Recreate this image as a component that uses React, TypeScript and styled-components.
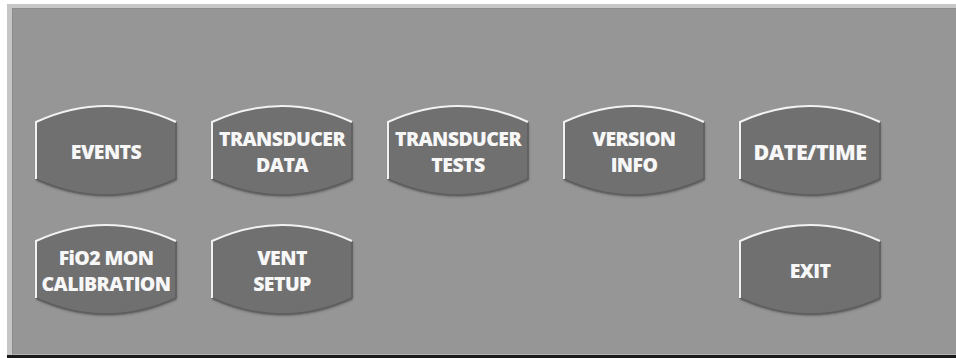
import React, { useId } from "react";
import styled, { createGlobalStyle } from "styled-components";

const Global = createGlobalStyle`
  html, body { margin: 0; padding: 0; background: #ffffff; }
  body { width: 956px; height: 358px; overflow: hidden; font-family: "Open Sans", "Liberation Sans", sans-serif; }
`;

const Screen = styled.div`
  width: 956px;
  height: 358px;
  display: flex;
  flex-direction: column;
  padding: 4px 0 0 7px;
  box-sizing: border-box;
`;

const Frame = styled.div`
  flex: 1;
  display: flex;
  flex-direction: column;
  border-left: 5px solid #c6c6c6;
  border-top: 4px solid #c6c6c6;
`;

const Panel = styled.div`
  flex: 1;
  background: #969696;
  border-top: 1px solid #8c8c8c;
  border-left: 1px solid #8c8c8c;
  border-bottom: 1px solid #b4b4b4;
  padding: 96px 0 0 22px;
  box-sizing: border-box;
`;

const BottomBar = styled.div`
  height: 3px;
  background: #1a1a1a;
`;

const Grid = styled.div`
  display: grid;
  grid-template-columns: repeat(5, 142px);
  grid-auto-rows: 92px;
  column-gap: 34px;
  row-gap: 27px;
`;

const Btn = styled.button<{ $col: number }>`
  grid-column: ${(p) => p.$col};
  position: relative;
  width: 142px;
  height: 92px;
  padding: 0;
  border: none;
  background: transparent;
  display: flex;
  align-items: center;
  justify-content: center;
  cursor: pointer;
`;

const Shape = styled.svg`
  position: absolute;
  left: 0;
  top: 0;
  overflow: visible;
`;

const Label = styled.span<{ $size: number }>`
  position: relative;
  color: #f7f7f7;
  font-family: "Open Sans", "Liberation Sans", sans-serif;
  font-weight: 800;
  font-size: ${(p) => p.$size}px;
  line-height: 26px;
  letter-spacing: -0.6px;
  text-align: center;
  margin-top: 2px;
`;

function KeyShape() {
  const id = useId().replace(/:/g, "");
  return (
    <Shape width="142" height="92" viewBox="0 0 142 92">
      <defs>
        <filter id={`s${id}`} x="-10%" y="-10%" width="120%" height="130%">
          <feDropShadow dx="0.5" dy="1.5" stdDeviation="1" floodColor="#3c3c3c" floodOpacity="0.7" />
        </filter>
      </defs>
      <path
        d="M1,17 Q71,-15 141,17 L141,74 Q71,106 1,74 Z"
        fill="#707070"
        filter={`url(#s${id})`}
      />
      <path d="M141,17 L141,74 Q71,106 1,74" fill="none" stroke="#5e5e5e" strokeWidth="1.6" />
      <path d="M1,74 L1,17 Q71,-15 141,17" fill="none" stroke="#f2f2f2" strokeWidth="2" />
    </Shape>
  );
}

type Item = { lines: string[]; col: number; size?: number };

const row1: Item[] = [
  { lines: ["EVENTS"], col: 1 },
  { lines: ["TRANSDUCER", "DATA"], col: 2 },
  { lines: ["TRANSDUCER", "TESTS"], col: 3 },
  { lines: ["VERSION", "INFO"], col: 4 },
  { lines: ["DATE/TIME"], col: 5, size: 21.5 },
];

const row2: Item[] = [
  { lines: ["FiO2 MON", "CALIBRATION"], col: 1 },
  { lines: ["VENT", "SETUP"], col: 2 },
  { lines: ["EXIT"], col: 5 },
];

function Key({ item }: { item: Item }) {
  return (
    <Btn $col={item.col}>
      <KeyShape />
      <Label $size={item.size ?? 19.5}>
        {item.lines.map((l, i) => (
          <React.Fragment key={i}>
            {i > 0 && <br />}
            {l}
          </React.Fragment>
        ))}
      </Label>
    </Btn>
  );
}

export default function App() {
  return (
    <>
      <Global />
      <Screen>
        <Frame>
          <Panel>
            <Grid>
              {row1.map((it, i) => (
                <Key key={`a${i}`} item={it} />
              ))}
              {row2.map((it, i) => (
                <Key key={`b${i}`} item={it} />
              ))}
            </Grid>
          </Panel>
        </Frame>
        <BottomBar />
      </Screen>
    </>
  );
}
